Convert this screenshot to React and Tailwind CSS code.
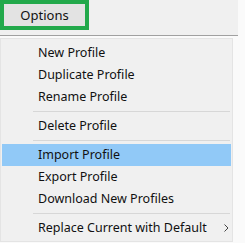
import React from 'react';

const items = [
  { label: 'New Profile' },
  { label: 'Duplicate Profile' },
  { label: 'Rename Profile' },
  { sep: true },
  { label: 'Delete Profile' },
  { sep: true },
  { label: 'Import Profile', active: true },
  { label: 'Export Profile' },
  { label: 'Download New Profiles' },
  { sep: true },
  { label: 'Replace Current with Default', submenu: true },
];

const App = () => {
  return (
    <div
      className="w-[245px] h-[243px] bg-[#fafafa] overflow-hidden text-[12.5px] text-[#111]"
      style={{ fontFamily: '"Noto Sans", "Liberation Sans", sans-serif' }}
    >
      {/* Toolbar strip */}
      <div className="w-[238px] bg-[#f0f0f0]">
        <div className="h-[35px]">
          <div className="w-[89px] h-[30px] border-[4px] border-[#22a94b] bg-[#e3e3e3] flex items-center justify-center">
            <span className="leading-none text-[13px]">Options</span>
          </div>
        </div>
        <div className="h-px bg-[#a0a0a0]"></div>
      </div>

      {/* Dropdown menu */}
      <div className="mt-[2px] w-[233px] h-[204px] bg-[#f0f0f0] border border-[#e4e4e4] pt-[3px] px-[1px]">
        {items.map((item, i) =>
          item.sep ? (
            <div key={i} className="h-[7px] flex items-center pl-[31px] pr-[1px]">
              <div className="h-px w-full bg-[#d7d7d7]"></div>
            </div>
          ) : (
            <div
              key={i}
              className={`h-[22px] flex items-center pl-[36px] pr-[2px] ${item.active ? 'bg-[#91c9f7]' : ''}`}
            >
              <span className="flex-1 leading-none">{item.label}</span>
              {item.submenu && (
                <svg width="5" height="8" viewBox="0 0 5 8">
                  <path d="M0.5 0.5 L4 4 L0.5 7.5" fill="none" stroke="#444" strokeWidth="1" />
                </svg>
              )}
            </div>
          )
        )}
      </div>
    </div>
  );
};

export default App;
